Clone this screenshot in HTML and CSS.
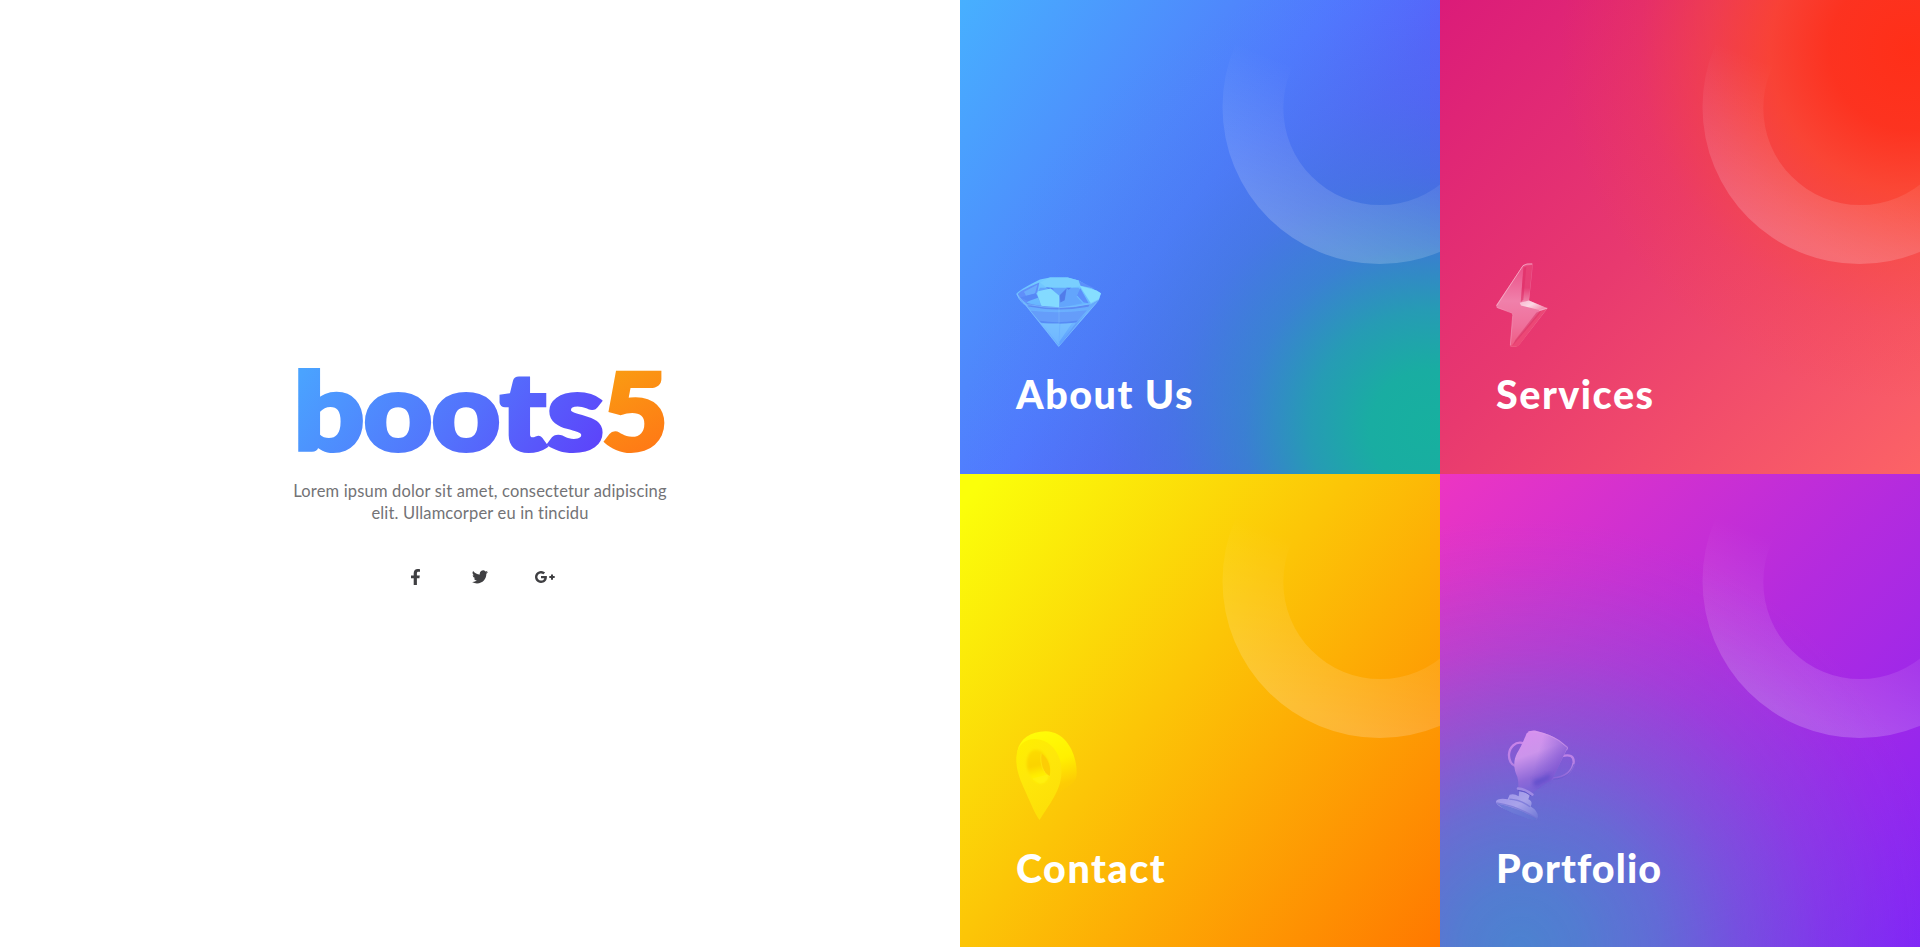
FILE: index.html
```html
<!DOCTYPE html>
<html lang="en">
<head>
<meta charset="utf-8">
<title>boots5</title>
<link rel="stylesheet" href="styles.css">
</head>
<body>
<main class="page">
  <section class="intro">
    <svg class="logo" viewBox="298 368 366 84" role="img" aria-label="boots5">
      <defs>
        <linearGradient id="logoInk" gradientUnits="userSpaceOnUse" x1="310" y1="360" x2="560" y2="540"><stop offset="0" stop-color="#4aa3ff"/><stop offset=".5" stop-color="#5373fc"/><stop offset="1" stop-color="#5e3cfa"/></linearGradient>
        <linearGradient id="logoOrange" gradientUnits="userSpaceOnUse" x1="610" y1="370" x2="655" y2="455"><stop offset="0" stop-color="#fa9c12"/><stop offset="1" stop-color="#ff7716"/></linearGradient>
      </defs>
      <g class="logo-text" fill="url(#logoInk)" stroke="url(#logoInk)">
        <text x="293.500" y="449.500" textLength="71" lengthAdjust="spacingAndGlyphs">b</text>
        <text x="363.500" y="449.500" textLength="69" lengthAdjust="spacingAndGlyphs">o</text>
        <text x="431.500" y="449.500" textLength="69" lengthAdjust="spacingAndGlyphs">o</text>
        <text x="500" y="449.500" textLength="46" lengthAdjust="spacingAndGlyphs">t</text>
        <text x="547" y="449.500" textLength="57" lengthAdjust="spacingAndGlyphs">s</text>
      </g>
      <text class="logo-text" x="602" y="449.500" textLength="66" lengthAdjust="spacingAndGlyphs" fill="url(#logoOrange)" stroke="url(#logoOrange)">5</text>
    </svg>
    <p class="lead"><span class="line">Lorem ipsum dolor sit amet, consectetur adipiscing</span><span class="line">elit. Ullamcorper eu in tincidu</span></p>
    <nav class="social">
      <a class="social-link" aria-label="Facebook"><svg width="9" height="16" viewBox="0 0 9 16"><path d="M2.7 16V9.2H0V6.4h2.7V4.2C2.7 1.5 4.3 0 6.7 0 7.8 0 8.8.1 9 .2v2.6H7.5c-1.3 0-1.6.6-1.6 1.6v2h2.9l-.4 2.8H5.9V16z"/></svg></a>
      <a class="social-link" aria-label="Twitter"><svg width="16" height="14" viewBox="0 0 24 20"><path d="M24 2.4a9.8 9.8 0 0 1-2.8.8A4.9 4.9 0 0 0 23.3.5a9.9 9.9 0 0 1-3.1 1.2 4.9 4.9 0 0 0-8.4 4.5A14 14 0 0 1 1.7 1 4.9 4.9 0 0 0 3.2 7.600 4.9 4.9 0 0 1 1 7v.1a4.9 4.9 0 0 0 3.900 4.800 4.900 4.900 0 0 1-2.200.1 4.900 4.900 0 0 0 4.600 3.400A9.900 9.900 0 0 1 0 17.500 14 14 0 0 0 7.500 19.700c9.100 0 14.300-7.700 14-14.700A10 10 0 0 0 24 2.400z"/></svg></a>
      <a class="social-link" aria-label="Google Plus"><svg width="20" height="12" viewBox="0 0 20 12"><path d="M6 5v2.300h3.300C9 8.700 7.800 9.600 6.100 9.600a3.600 3.600 0 1 1 2.300-6.300L10.100 1.600A6 6 0 1 0 6.100 12c3.500 0 5.800-2.400 5.800-5.900 0-.4 0-.8-.1-1.100zM16 3.400v1.700h-1.700v2H16v1.700h2V7.100h1.700v-2H18V3.400z"/></svg></a>
    </nav>
  </section>

  <section class="tiles">
    <a class="tile about">
      <svg class="ring" viewBox="0 0 480 474">
        <defs><linearGradient id="ringFade" gradientUnits="userSpaceOnUse" x1="278" y1="43" x2="221" y2="186"><stop offset="0" stop-color="#fff" stop-opacity="0"/><stop offset="1" stop-color="#fff" stop-opacity=".19"/></linearGradient></defs>
        <path id="ringShape" fill="url(#ringFade)" fill-rule="evenodd" d="M262.500 107a157 157 0 1 0 314 0a157 157 0 1 0-314 0zM323.300 108a97 97 0 1 0 194 0a97 97 0 1 0-194 0z"/>
      </svg>
      <svg class="icon" width="85" height="70" viewBox="48 50 255 209">
        <defs>
          <linearGradient id="gemLow" x1="0" y1="0" x2="0" y2="1"><stop offset="0" stop-color="#60a0fb"/><stop offset=".5" stop-color="#70b8ff"/><stop offset="1" stop-color="#599dff"/></linearGradient>
          <linearGradient id="gemTop" x1="0" y1="0" x2="0" y2="1"><stop offset="0" stop-color="#74cdff"/><stop offset="1" stop-color="#66b3ff"/></linearGradient>
          <filter id="gemSoft"><feGaussianBlur stdDeviation="1.500"/></filter>
        </defs>
        <path fill="url(#gemLow)" d="M51 103L176 258 296 121 302 100z"/>
        <path fill="url(#gemTop)" d="M49 100Q57 88 120 57L150 51H203L236 60 302 98 297 117 272 132Q175 158 79 132L56 113z"/>
        <g filter="url(#gemSoft)">
          <path fill="#608ffa" d="M53 101Q60 90 118 66L112 95 79 128 58 113z"/>
          <path fill="#6bacfd" d="M72 94L112 73 105 99 78 106z"/>
          <path fill="#5788f6" d="M60 111L108 98 116 111 85 122z"/>
          <path fill="#64a5fc" d="M120 82H236L243 90 230 108 248 128 182 142 125 140 110 101z"/>
          <path fill="#5280f3" d="M137 80L155 82 163 87 145 85zM198 81H214L206 88z"/>
        </g>
        <path fill="#79cffe" d="M120 66L150 51H203L236 60 241 78 210 81 150 80 136 79z"/>
        <path fill="#83daff" d="M114 92L152 84 177 105V141L125 139 111 100z"/>
        <path fill="#517ce9" d="M179 104L200 83 194 119 181 126z"/>
        <path filter="url(#gemSoft)" fill="#5c8ffb" d="M241 83L266 128 251 126 231 105zM236 61L286 85 242 76z"/>
        <path fill="#86deff" d="M239 76L290 90 303 98 296 117 273 129z"/>
        <path fill="#5c8bf3" d="M78 127Q170 151 270 131L265 139Q174 156 86 138z"/>
        <path fill="none" stroke="#7fc2ff" stroke-width="2" d="M51 101Q67 140 90 133Q178 151 270 130L296 117M51 101L176 258 290 126"/>
        <path fill="#659dfa" d="M92 151Q178 160 261 149L231 184Q172 193 119 184z"/>
        <path fill="#578bf5" d="M119 181Q174 190 233 180L228 186Q174 193 123 187z"/>
        <path fill="#82cbff" opacity=".5" d="M126 190L176 188V253zM181 190L216 188 178 244z"/>
        <path fill="#5d92f8" opacity=".55" d="M228 187L178 255 258 159z"/>
        <path fill="none" stroke="#a0e5ff" opacity=".4" stroke-width="1.500" d="M177 104V253M123 188L176 256"/>
      </svg>
      <h2 class="title">About Us</h2>
    </a>

    <a class="tile services">
      <svg class="ring" viewBox="0 0 480 474"><use href="#ringShape"/></svg>
      <svg class="icon" width="52" height="84" viewBox="48 38 156 253">
        <defs>
          <linearGradient id="boltFace" x1="0" y1="0" x2="0" y2="1"><stop offset="0" stop-color="#ea4b84"/><stop offset=".45" stop-color="#f080aa"/><stop offset=".75" stop-color="#ef709b"/><stop offset="1" stop-color="#ef5b83"/></linearGradient>
          <linearGradient id="boltSide" x1="0" y1="0" x2="0" y2="1"><stop offset="0" stop-color="#e84176"/><stop offset=".6" stop-color="#e63f76"/><stop offset="1" stop-color="#f08aaf"/></linearGradient>
          <linearGradient id="boltShelf" x1="0" y1="0" x2="1" y2=".6"><stop offset="0" stop-color="#f7b6ce"/><stop offset=".5" stop-color="#fbd8e4"/><stop offset="1" stop-color="#f48daf"/></linearGradient>
          <filter id="boltSoft"><feGaussianBlur stdDeviation="2"/></filter>
        </defs>
        <path fill="url(#boltFace)" d="M129 45Q135 39 156 39L159 43 147 151 203 174 117 286 108 291H92L90 286 99 192 92 186 50 173 48 165z"/>
        <path fill="url(#boltSide)" d="M130 50L157 43 147 151 122 159z"/>
        <path filter="url(#boltSoft)" fill="#e02e68" opacity=".6" d="M131 52L139 49 130 148 122 157z"/>
        <path filter="url(#boltSoft)" fill="url(#boltShelf)" d="M119 158L147 151 201 174 181 180 123 166z"/>
        <path fill="#ec4876" d="M201 176L114 289H93L180 183z"/>
        <path filter="url(#boltSoft)" fill="#d93568" opacity=".55" d="M184 181L169 188 106 269 99 286 177 194z"/>
        <path fill="none" stroke="#f6afc8" stroke-width="2.500" d="M50 166L129 46Q139 39 157 41M178 181L202 174"/>
        <path fill="none" stroke="#f397b7" stroke-width="2" d="M51 172L94 188Q99 190 98 196L91 286"/>
      </svg>
      <h2 class="title">Services</h2>
    </a>

    <a class="tile contact">
      <svg class="ring" viewBox="0 0 480 474"><use href="#ringShape"/></svg>
      <svg class="icon" width="61" height="90" viewBox="48 32 184 270">
        <defs>
          <linearGradient id="pinSide" x1=".3" y1="0" x2=".55" y2="1"><stop offset="0" stop-color="#fffc08"/><stop offset=".4" stop-color="#fff000"/><stop offset=".68" stop-color="#fdcc05"/><stop offset="1" stop-color="#fcc604" stop-opacity="0"/></linearGradient>
          <linearGradient id="pinFace" x1="0" y1="0" x2=".5" y2="1"><stop offset="0" stop-color="#fff000"/><stop offset=".5" stop-color="#fee70a"/><stop offset="1" stop-color="#fddf08"/></linearGradient>
          <linearGradient id="pinHole" x1="0" y1="0" x2="0" y2="1"><stop offset="0" stop-color="#fddc00"/><stop offset=".45" stop-color="#fbd300"/><stop offset=".75" stop-color="#ffef06"/><stop offset="1" stop-color="#fff30b"/></linearGradient>
          <filter id="pinSoft"><feGaussianBlur stdDeviation="4"/></filter>
        </defs>
        <path fill="url(#pinSide)" d="M52 92C60 55 90 33 138 32C200 34 231 100 231 156Q232 179 214 193L184 213 122 296Q95 230 80 170z"/>
        <path fill="url(#pinFace)" d="M49 110C52 68 84 48 122 58C159 67 187 106 185 157C184 211 148 252 119 300C107 285 91 246 76 213C59 176 47 145 49 110z"/>
        <ellipse filter="url(#pinSoft)" cx="115" cy="139" rx="33" ry="52" transform="rotate(-14 115 139)" fill="url(#pinHole)"/>
        <path fill="#fccd05" d="M124 99C119 130 130 158 149 168C157 140 142 109 124 99z"/>
        <path fill="none" stroke="#fff11c" stroke-width="1.500" d="M124 99C119 130 130 158 149 168"/>
      </svg>
      <h2 class="title">Contact</h2>
    </a>

    <a class="tile portfolio">
      <svg class="ring" viewBox="0 0 480 474"><use href="#ringShape"/></svg>
      <svg class="icon" width="79" height="91" viewBox="48 26 237 272">
        <defs>
          <linearGradient id="cupBody" x1=".25" y1="0" x2=".55" y2="1"><stop offset="0" stop-color="#d790ef"/><stop offset=".35" stop-color="#cc94eb"/><stop offset=".7" stop-color="#8e69d8"/><stop offset="1" stop-color="#6b61d5"/></linearGradient>
          <linearGradient id="cupShade" x1="0" y1="0" x2="1" y2=".35"><stop offset=".5" stop-color="#7853d3" stop-opacity="0"/><stop offset="1" stop-color="#7c4ed0" stop-opacity=".65"/></linearGradient>
          <linearGradient id="cupBase" x1="0" y1="0" x2="1" y2="1"><stop offset="0" stop-color="#9c91e9"/><stop offset=".5" stop-color="#a9a3ea"/><stop offset="1" stop-color="#6b75d5"/></linearGradient>
          <linearGradient id="cupHandle" gradientUnits="userSpaceOnUse" x1="0" y1="60" x2="0" y2="172"><stop offset="0" stop-color="#ca83e9"/><stop offset=".6" stop-color="#b681e4"/><stop offset="1" stop-color="#8763d7"/></linearGradient>
          <filter id="cupSoft"><feGaussianBlur stdDeviation="6"/></filter>
        </defs>
        <path fill="none" stroke="url(#cupHandle)" stroke-width="7" stroke-linecap="round" d="M126 64C106 60 89 77 87 98C86 115 94 130 105 133M246 104C269 98 282 103 281 122C278 147 259 169 217 171"/>
        <path fill="none" stroke="#5550c7" opacity=".55" stroke-width="3" d="M220 173C256 171 275 153 282 128"/>
        <path fill="url(#cupBody)" d="M140 35Q149 25 165 27Q225 40 263 76Q266 84 259 87Q242 120 221 166Q214 179 195 187L167 203 155 219 114 202Q117 186 112 166C101 144 99 118 111 95Q124 76 140 35z"/>
        <path fill="url(#cupShade)" d="M140 35Q149 25 165 27Q225 40 263 76Q242 120 221 166Q214 179 195 187L155 219 114 202C107 147 99 118 111 95z"/>
        <path filter="url(#cupSoft)" fill="#4f42c5" opacity=".6" d="M158 176Q190 169 214 154L208 174 164 197z"/>
        <path fill="none" stroke="#d89bea" stroke-width="2" d="M145 30Q212 29 262 78"/>
        <path fill="url(#cupBase)" d="M118 208L150 218 145 233Q160 239 152 255Q173 267 174 286L169 296Q115 286 65 258Q48 249 48 240Q51 229 83 233L89 220Q101 215 116 224z"/>
        <path fill="none" stroke="#9e8ae4" stroke-width="8" stroke-linecap="round" d="M114 201Q134 202 157 219"/>
        <path fill="none" stroke="#6159ca" stroke-width="3" d="M114 207Q136 207 153 223"/>
        <path fill="none" stroke="#7372d5" opacity=".7" stroke-width="4" d="M88 233Q121 234 150 256M50 244Q112 253 172 292"/>
        <path fill="#606fd2" opacity=".8" d="M50 246Q105 255 170 291L168 297Q90 281 50 246z"/>
      </svg>
      <h2 class="title tight">Portfolio</h2>
    </a>
  </section>
</main>
</body>
</html>
```
FILE: styles.css
```css
* { box-sizing: border-box; }

body {
  margin: 0;
  background: #fff;
  font-family: Lato, "Open Sans", sans-serif;
}

.page {
  display: grid;
  grid-template-columns: 1fr 1fr;
  height: 100vh;
  overflow: hidden;
}

.intro {
  display: flex;
  flex-direction: column;
  align-items: center;
  justify-content: center;
  padding-top: 6px;
}

.logo {
  display: block;
  width: 366px;
  height: 84px;
  margin-left: 2px;
  overflow: visible;
}

.logo-text {
  font-family: Lato, sans-serif;
  font-size: 107px;
  font-weight: 900;
  stroke-width: 4px;
}

.lead {
  margin: 28px 0 45px;
  color: #737376;
  font-size: 16.5px;
  line-height: 22px;
  text-align: center;
  letter-spacing: .17px;
}

.line { display: block; white-space: nowrap; }

.social {
  display: grid;
  grid-template-columns: repeat(3, 64.5px);
  height: 16px;
}

.social-link {
  display: flex;
  align-items: center;
  justify-content: center;
  fill: #3f3f42;
}

.tiles {
  display: grid;
  grid-template-columns: 1fr 1fr;
  grid-template-rows: 1fr 1fr;
}

.tile {
  position: relative;
  display: flex;
  flex-direction: column;
  justify-content: flex-end;
  align-items: flex-start;
  padding: 0 56px 55.5px;
  overflow: hidden;
}

.ring {
  position: absolute;
  top: 0;
  right: 0;
  width: 480px;
  height: 474px;
}

.icon { display: block; }

.title {
  margin: 23px 0 0;
  color: #fff;
  font-size: 39.5px;
  font-weight: 900;
  line-height: 48px;
  letter-spacing: 1.5px;
  font-variant-ligatures: none;
  white-space: nowrap;
}

.title.tight { letter-spacing: 1.1px; }

.about {
  background:
    radial-gradient(circle at 470px 430px, #17b09f 0, rgba(23, 176, 159, .97) 60px, rgba(25, 174, 163, .8) 120px, rgba(34, 160, 178, .55) 185px, rgba(42, 150, 190, .34) 255px, rgba(50, 145, 200, .17) 330px, rgba(60, 140, 210, .05) 410px, rgba(60, 140, 210, 0) 470px),
    linear-gradient(125deg, #47b0ff 0%, #4f87fc 34%, #5178ff 46%, #5663fb 61%, #5a50fa 80%);
}

.services {
  background:
    radial-gradient(circle at 470px 50px, #ff2f18 0, rgba(254, 50, 26, .93) 80px, rgba(254, 70, 36, .76) 140px, rgba(252, 76, 42, .46) 200px, rgba(250, 72, 50, .17) 270px, rgba(250, 72, 55, 0) 350px),
    linear-gradient(135deg, #db1b79 0%, #e8396f 46%, #fc6366 100%);
}

.contact {
  background: linear-gradient(130deg, #fbff0a 3%, #fcc507 45%, #ff7800 100%);
}

.portfolio {
  background:
    radial-gradient(circle at 80px 474px, #4c82d0 0, rgba(76, 130, 208, .93) 60px, rgba(76, 130, 208, .74) 140px, rgba(76, 130, 208, .44) 220px, rgba(76, 130, 208, .2) 300px, rgba(76, 130, 208, .05) 380px, rgba(76, 130, 208, 0) 430px),
    linear-gradient(135deg, #ed35c2 0%, #b42bde 50%, #8224f7 100%);
}
```
